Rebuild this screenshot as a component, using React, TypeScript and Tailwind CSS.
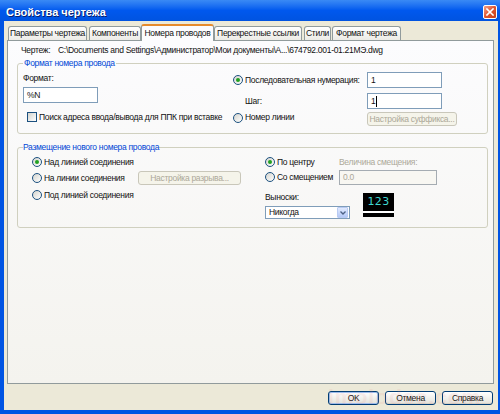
import React from "react";

function Radio({ checked }: { checked?: boolean }) {
  return (
    <span className="w-[10px] h-[10px] rounded-full border border-[#1C5180] bg-gradient-to-br from-[#D4D4CE] to-white flex items-center justify-center shrink-0">
      {checked ? <span className="w-[4px] h-[4px] rounded-full bg-[#21A121]" /> : null}
    </span>
  );
}

function Checkbox() {
  return (
    <span className="w-[10px] h-[10px] border border-[#1C5180] bg-gradient-to-br from-[#D4D4CE] to-white shrink-0" />
  );
}

function DisabledButton({ label, w }: { label: string; w: string }) {
  return (
    <div
      className={`${w} h-[14px] rounded-[3px] border border-[#C9C7BA] bg-[#F5F4EA] text-[#ACA899] flex items-center justify-center leading-none whitespace-nowrap`}
    >
      {label}
    </div>
  );
}

function Button({ label, def }: { label: string; def?: boolean }) {
  return (
    <div
      className={`w-[51px] h-[14px] rounded-[3px] border border-[#003C74] bg-gradient-to-b from-white to-[#E3E2DA] flex items-center justify-center leading-none ${
        def ? "shadow-[inset_0_0_0_1px_#9DBBEB]" : "shadow-[inset_0_-1px_0_#D6D0C5]"
      }`}
    >
      {label}
    </div>
  );
}

const tabs = [
  { label: "Параметры чертежа", cls: "w-[79px] ml-0" },
  { label: "Компоненты", cls: "w-[52px] ml-[2px]" },
  { label: "Номера проводов", cls: "w-[73px] ml-0", active: true },
  { label: "Перекрестные ссылки", cls: "w-[88px] ml-0" },
  { label: "Стили", cls: "w-[27px] ml-[2px]" },
  { label: "Формат чертежа", cls: "w-[69px] ml-[1px]" },
];

export default function App() {
  return (
    <div className="w-[500px] h-[414px] bg-[#0054E3] flex flex-col overflow-hidden relative font-['Liberation_Sans',Arial,sans-serif] text-[8.5px] tracking-[-0.3px] text-[#111]">
      {/* Title bar */}
      <div className="h-[21px] shrink-0 flex items-center pt-[3px] pl-[6px] pr-[3px] bg-gradient-to-b from-[#3A8AF5] via-[#0058EE] to-[#0053E0]">
        <span className="text-white font-bold text-[11px] tracking-normal [text-shadow:1px_1px_0_#0A1E6A] leading-none">
          Свойства чертежа
        </span>
        <div className="ml-auto w-[14px] h-[14px] rounded-[2px] border border-white bg-gradient-to-br from-[#F0A08A] via-[#E0552E] to-[#C4401C] flex items-center justify-center">
          <svg width="8" height="8" viewBox="0 0 8 8">
            <path d="M1 1 L7 7 M7 1 L1 7" stroke="white" strokeWidth="1.6" strokeLinecap="square" />
          </svg>
        </div>
      </div>

      {/* Body */}
      <div className="flex-1 ml-[4px] mr-[2px] mb-[4px] bg-[#ECE9D8] flex flex-col">
        {/* Tabs */}
        <div className="h-[19px] pt-[3px] pl-[4px] flex items-end">
          {tabs.map((t) =>
            t.active ? (
              <div
                key={t.label}
                className={`${t.cls} h-[17px] -mb-px relative z-10 bg-[#FCFCFE] border border-[#919B9C] border-b-0 border-t-[#E68B2C] border-t-2 rounded-t-[3px] flex items-center justify-center leading-none whitespace-nowrap`}
              >
                {t.label}
              </div>
            ) : (
              <div
                key={t.label}
                className={`${t.cls} h-[14px] bg-gradient-to-b from-white to-[#ECEBE6] border border-[#919B9C] border-b-0 rounded-t-[3px] flex items-center justify-center leading-none whitespace-nowrap`}
              >
                {t.label}
              </div>
            )
          )}
        </div>

        {/* Panel */}
        <div className="h-[344px] ml-[3px] mr-[4px] border border-[#919B9C] bg-gradient-to-b from-[#FCFCFE] to-[#F4F3EE] flex flex-col">
          <div className="pt-[4px] pl-[13px] h-[14px] flex items-center leading-[10px] whitespace-nowrap">
            <span className="w-[37px]">Чертеж:</span>
            <span>{"C:\\Documents and Settings\\Администратор\\Мои документы\\A...\\674792.001-01.21МЭ.dwg"}</span>
          </div>

          {/* Group 1 */}
          <fieldset className="mt-[4px] ml-[9px] w-[471px] border border-[#D0D0BF] rounded-[3px] pl-[5px] pb-[7px]">
            <legend className="px-[1px] leading-[9px] text-[#0046D5]">Формат номера провода</legend>
            <div className="flex">
              <div className="w-[210px] flex flex-col">
                <div className="mt-[5px] leading-[10px]">Формат:</div>
                <div className="mt-[4px] w-[75px] h-[16px] border border-[#7F9DB9] bg-white flex items-center px-[3px] leading-none">
                  %N
                </div>
                <div className="mt-[9px] ml-[4px] flex items-center gap-[2px] leading-[10px] whitespace-nowrap">
                  <Checkbox />
                  <span>Поиск адреса ввода/вывода для ППК при вставке</span>
                </div>
              </div>
              <div className="flex flex-col">
                <div className="mt-[4px] h-[16px] flex items-center">
                  <div className="w-[134px] flex items-center gap-[2px] whitespace-nowrap">
                    <Radio checked />
                    <span>Последовательная нумерация:</span>
                  </div>
                  <div className="w-[75px] h-[16px] border border-[#7F9DB9] bg-white flex items-center px-[3px] leading-none">
                    1
                  </div>
                </div>
                <div className="mt-[5px] h-[16px] flex items-center">
                  <div className="w-[134px] pl-[12px]">Шаг:</div>
                  <div className="w-[75px] h-[16px] border border-[#7F9DB9] bg-white flex items-center px-[3px] leading-none">
                    1<span className="ml-px w-px h-[11px] bg-black" />
                  </div>
                </div>
                <div className="mt-[3px] h-[14px] flex items-center">
                  <div className="w-[134px] flex items-center gap-[2px] whitespace-nowrap -mt-[3px]">
                    <Radio />
                    <span>Номер линии</span>
                  </div>
                  <DisabledButton label="Настройка суффикса..." w="w-[90px]" />
                </div>
              </div>
            </div>
          </fieldset>

          {/* Group 2 */}
          <fieldset className="mt-[9px] ml-[9px] w-[471px] border border-[#D0D0BF] rounded-[3px] pl-[5px] pb-[8px]">
            <legend className="px-0 leading-[9px] text-[#0046D5]">Размещение нового номера провода</legend>
            <div className="flex">
              <div className="w-[242px] pl-[9px] flex flex-col">
                <div className="mt-[3px] h-[14px] flex items-center gap-[2px] whitespace-nowrap">
                  <Radio checked />
                  <span>Над линией соединения</span>
                </div>
                <div className="mt-[2px] h-[14px] flex items-center whitespace-nowrap">
                  <div className="w-[106px] flex items-center gap-[2px]">
                    <Radio />
                    <span>На линии соединения</span>
                  </div>
                  <DisabledButton label="Настройка разрыва..." w="w-[103px]" />
                </div>
                <div className="mt-[3px] h-[14px] flex items-center gap-[2px] whitespace-nowrap">
                  <Radio />
                  <span>Под линией соединения</span>
                </div>
              </div>
              <div className="flex flex-col">
                <div className="mt-[3px] h-[14px] flex items-center whitespace-nowrap">
                  <div className="w-[74px] flex items-center gap-[2px]">
                    <Radio checked />
                    <span>По центру</span>
                  </div>
                  <span className="text-[#ACA899]">Величина смещения:</span>
                </div>
                <div className="h-[16px] flex items-center whitespace-nowrap">
                  <div className="w-[74px] flex items-center gap-[2px]">
                    <Radio />
                    <span>Со смещением</span>
                  </div>
                  <div className="w-[98px] h-[15px] border border-[#A5ACB2] bg-[#F8F7F2] text-[#ACA899] flex items-center px-[3px] leading-none">
                    0.0
                  </div>
                </div>
                <div className="mt-[7px] flex items-start">
                  <div className="w-[85px] flex flex-col">
                    <div className="leading-[10px]">Выноски:</div>
                    <div className="mt-[4px] h-[13px] border border-[#7F9DB9] bg-white flex items-center leading-none">
                      <span className="pl-[3px] flex-1">Никогда</span>
                      <span className="w-[11px] h-[11px] mr-px rounded-[1px] bg-gradient-to-b from-[#E1EAFE] to-[#B4C8F6] border border-[#B9CBF3] flex items-center justify-center">
                        <svg width="6" height="4" viewBox="0 0 6 4">
                          <path d="M0.5 0.5 L3 3 L5.5 0.5" stroke="#4D6185" strokeWidth="1.3" fill="none" />
                        </svg>
                      </span>
                    </div>
                  </div>
                  <div className="ml-[13px] mt-[1px] w-[31px] h-[24px] bg-black flex flex-col items-center">
                    <span className="mt-[3px] text-[#3FD7D2] text-[11px] leading-[11px] tracking-[0.3px] font-['DejaVu_Sans',sans-serif]">
                      123
                    </span>
                    <span className="mt-[4px] w-full h-[2px] bg-white" />
                  </div>
                </div>
              </div>
            </div>
          </fieldset>
        </div>

        {/* Bottom buttons */}
        <div className="mt-[7px] pr-[5px] flex justify-end gap-[6px]">
          <Button label="OK" def />
          <Button label="Отмена" />
          <Button label="Справка" />
        </div>
      </div>

      <div className="pointer-events-none absolute left-[328px] top-[381px] text-[21px] font-bold text-[#E88A8A] opacity-[0.12] tracking-[1px]">
        imolodec.com
      </div>
    </div>
  );
}
